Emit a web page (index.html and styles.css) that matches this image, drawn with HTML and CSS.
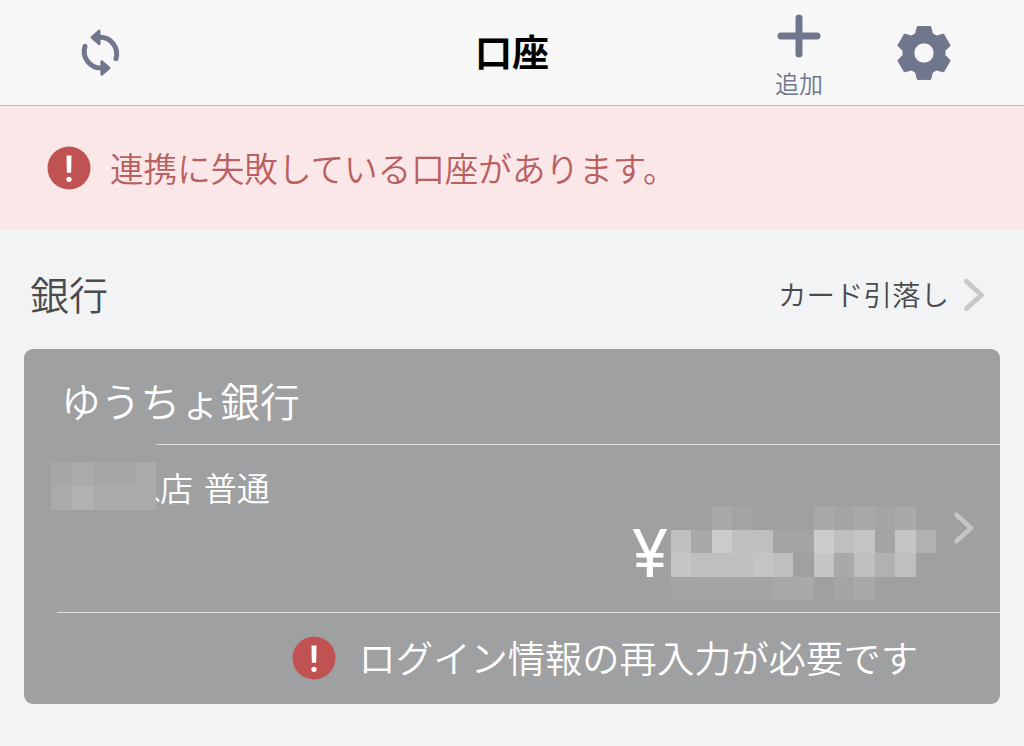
FILE: index.html
```html
<!DOCTYPE html>
<html lang="ja">
<head>
    <meta charset="utf-8">
    <title>口座</title>
    <meta name="viewport" content="width=device-width, initial-scale=1">
    <link rel="stylesheet" href="styles.css">
</head>
<body>
    <header class="header">
        <div class="header-left">
            <svg class="icon-refresh" viewBox="0 0 240 240">
                <path class="arc" d="M118 82A50 50 0 0 1 168 146M125 174A50 50 0 0 1 75 109"/>
                <path class="head" d="M95 82L118 62V102ZM148 174L125 154V194Z"/>
            </svg>
        </div>
        <h1>口座</h1>
        <div class="header-right">
            <div class="add">
                <svg class="icon-plus" viewBox="0 0 44 44">
                    <path d="M22 4V40M4 22H40"/>
                </svg>
                <span>追加</span>
            </div>
            <svg class="icon-gear" viewBox="-28 -28 56 56">
                <path fill-rule="evenodd" d="M-8.5-19.3L-6.6-26.4H6.6L8.5-19.3L12.5-17L19.6-18.9L26.2-7.5L21-2.3V2.3L26.2 7.5L19.6 18.9L12.5 17L8.5 19.3L6.6 26.4H-6.6L-8.5 19.3L-12.5 17L-19.6 18.9L-26.2 7.5L-21 2.3V-2.3L-26.2-7.5L-19.6-18.9L-12.5-17ZM0-10.2A10.2 10.2 0 1 0 0 10.2A10.2 10.2 0 1 0 0-10.2Z"/>
            </svg>
        </div>
    </header>

    <div class="notice">
        <svg class="icon-alert" viewBox="-22 -22 44 44">
            <circle class="bg" r="21.5"/>
            <path d="M-2.5-12.5H2.5L2.2 4.8H-2.2Z"/>
            <circle cy="11.3" r="2.6"/>
        </svg>
        <p>連携に失敗している口座があります。</p>
    </div>

    <div class="section-title">
        <h2>銀行</h2>
        <div class="link">
            <span>カード引落し</span>
            <svg class="chevron" viewBox="0 0 22 34">
                <path d="M3.5 3.5L18.5 17L3.5 30.5"/>
            </svg>
        </div>
    </div>

    <div class="card">
        <h3>ゆうちょ銀行</h3>
        <div class="account">
            <p class="branch">店 普通</p>
            <!-- 支店名のモザイク -->
            <svg class="mask" viewBox="0 0 109 96">
                <path class="base" d="M0 0H105V94H0Z"/>
                <path class="warm" d="M0 0H105V24H0Z"/>
                <path class="m1" d="M0 24H105V72H0Z"/>
                <path class="m2" d="M0 48H105V72H0ZM21 24H43V48H21ZM85 24H105V48H85Z"/>
                <path class="m3" d="M21 48H43V72H21Z"/>
                <path class="tail" d="M105 60L108 63.5"/>
            </svg>
            <div class="amount">
                <span>¥</span>
                <!-- 金額のモザイク -->
                <svg class="mosaic" viewBox="0 0 13 4" preserveAspectRatio="none">
                    <path class="m1" d="M3 0H4V1H3ZM8 0H9V1H8ZM10 0H11V1H10ZM5 1H7V2H5ZM10 1H11V2H10ZM0 3H5V4H0ZM8 3H9V4H8Z"/>
                    <path class="m2" d="M7 0H8V1H7ZM9 0H10V1H9ZM11 0H12V1H11ZM2 0H3V1H2ZM1 1H2V2H1ZM8 2H9V3H8ZM5 3H7V4H5ZM9 3H10V4H9Z"/>
                    <path class="m3" d="M12 1H13V2H12ZM10 2H11V3H10Z"/>
                    <path class="m4" d="M0 1H1V2H0ZM3 1H5V2H3ZM1 2H6V3H1ZM8 1H9V2H8ZM9 2H10V3H9ZM11 2H12V3H11Z"/>
                    <path class="m5" d="M0 2H1V3H0ZM7 2H8V3H7ZM9 1H10V2H9ZM11 1H12V2H11ZM4 2H5V3H4Z"/>
                    <path class="m6" d="M2 1H3V2H2ZM7 1H8V2H7Z"/>
                </svg>
            </div>
            <svg class="chevron" viewBox="0 0 22 34">
                <path d="M3.5 4L18 17L3.5 30"/>
            </svg>
        </div>
        <div class="error">
            <svg class="icon-alert" viewBox="-22 -22 44 44">
                <circle class="bg" r="21.5"/>
                <path d="M-2.5-12.5H2.5L2.2 4.8H-2.2Z"/>
                <circle cy="11.3" r="2.6"/>
            </svg>
            <p>ログイン情報の再入力が必要です</p>
        </div>
    </div>
</body>
</html>
```

FILE: styles.css
```css
*{
    box-sizing: border-box;
}
body,h1,h2,h3,p{
    margin: 0;
}
body{
    height: 746px;
    overflow: hidden;
    background: #f2f3f5;
    color: #4a4b4e;
    font-family: "Noto Sans CJK JP", sans-serif;
    font-weight: 350;
}
h1,h2,h3,p,span{
    white-space: nowrap;
    line-height: 1;
}
h2,h3{
    font-weight: 350;
}
svg{
    display: block;
    flex: none;
}

/* ヘッダー */
.header{
    display: grid;
    grid-template-columns: 1fr auto 1fr;
    align-items: center;
    height: 106px;
    background: #f7f7f7;
    border-bottom: 1px solid #c3b9bf;
}
.header h1{
    padding-bottom: 2px;
    font-size: 37px;
    font-weight: 700;
    color: #000;
}
.header-left{
    padding-left: 60px;
}
.icon-refresh{
    width: 80px;
    height: 80px;
    margin-top: -6px;
}
.icon-refresh .arc{
    fill: none;
    stroke: #70778c;
    stroke-width: 15;
    stroke-linecap: round;
}
.icon-refresh .head{
    fill: #70778c;
    stroke: #70778c;
    stroke-width: 7;
    stroke-linejoin: round;
}
.header-right{
    display: flex;
    justify-content: flex-end;
    align-items: center;
    gap: 73px;
    padding-right: 72px;
}
.add{
    display: flex;
    flex-direction: column;
    align-items: center;
    gap: 13px;
    padding-top: 3px;
    color: #70778c;
    font-size: 24px;
}
.icon-plus{
    width: 44px;
    height: 44px;
}
.icon-plus path{
    stroke: #70778c;
    stroke-width: 7;
    stroke-linecap: round;
}
.icon-gear{
    width: 56px;
    height: 56px;
}
.icon-gear path{
    fill: #70778c;
    stroke: #70778c;
    stroke-linejoin: round;
}

/* お知らせ */
.notice{
    display: flex;
    align-items: center;
    gap: 19px;
    height: 124px;
    padding: 0 0 1px 47px;
    background: #fbe6e8;
    color: #b8605f;
    font-size: 33.6px;
}
.icon-alert{
    width: 44px;
    height: 44px;
    fill: #fff;
}
.icon-alert .bg{
    fill: #c05351;
}

.section-title{
    display: flex;
    justify-content: space-between;
    align-items: center;
    height: 119px;
    padding: 10px 39px 0 30px;
}
.section-title h2{
    padding-bottom: 3px;
    font-size: 39px;
}
.link{
    display: flex;
    align-items: center;
    gap: 14px;
    font-size: 28.5px;
}
.chevron{
    width: 22px;
    height: 34px;
    fill: none;
    stroke: #c7c8cb;
    stroke-width: 5;
    stroke-linecap: round;
    stroke-linejoin: round;
}

/* 口座カード */
.card{
    height: 355px;
    margin: 0 24px;
    border-radius: 9px;
    background: #9fa0a2;
    color: #fff;
}
.card h3{
    height: 95px;
    padding: 3px 0 0 37px;
    font-size: 39.8px;
    line-height: 95px;
}
.account{
    position: relative;
    display: flex;
    justify-content: flex-end;
    height: 169px;
    margin-left: 33px;
    padding-right: 25px;
    border-top: 1px solid #e1e1e2;
    border-bottom: 1px solid #e1e1e2;
}
.branch{
    margin: 26px auto 0 103px;
    font-size: 33px;
    word-spacing: 3.5px;
}
.mask{
    position: absolute;
    left: -6px;
    top: -7px;
    width: 109px;
    height: 96px;
}
.mask .base{
    fill: #9fa0a2;
}
.mask .warm{
    fill: #a09fa1;
}
.mask .m1{
    fill: #a5a6a8;
}
.mask .m2{
    fill: #a9aaac;
}
.mask .m3{
    fill: #b1b2b4;
}
.mask .tail{
    stroke: #fff;
    stroke-width: 2;
}
.amount{
    display: flex;
    align-items: center;
    gap: 3px;
    height: 94px;
    margin-top: 61px;
    font-family: Inter, sans-serif;
    font-size: 66px;
    font-weight: 400;
}
.mosaic{
    width: 265px;
    height: 94px;
    shape-rendering: crispEdges;
}
.mosaic .m1{
    fill: #a3a4a6;
}
.mosaic .m2{
    fill: #a8a9ab;
}
.mosaic .m3{
    fill: #b0b1b3;
}
.mosaic .m4{
    fill: #bebfc1;
}
.mosaic .m5{
    fill: #c4c5c7;
}
.mosaic .m6{
    fill: #cbccce;
}
.account .chevron{
    margin: 66px 0 0 17px;
    stroke: #c4c5c7;
    stroke-width: 4.5;
}
.error{
    display: flex;
    justify-content: flex-end;
    align-items: center;
    gap: 23px;
    height: 91px;
    padding: 0 82px 2px 0;
    font-size: 37.3px;
}
```
